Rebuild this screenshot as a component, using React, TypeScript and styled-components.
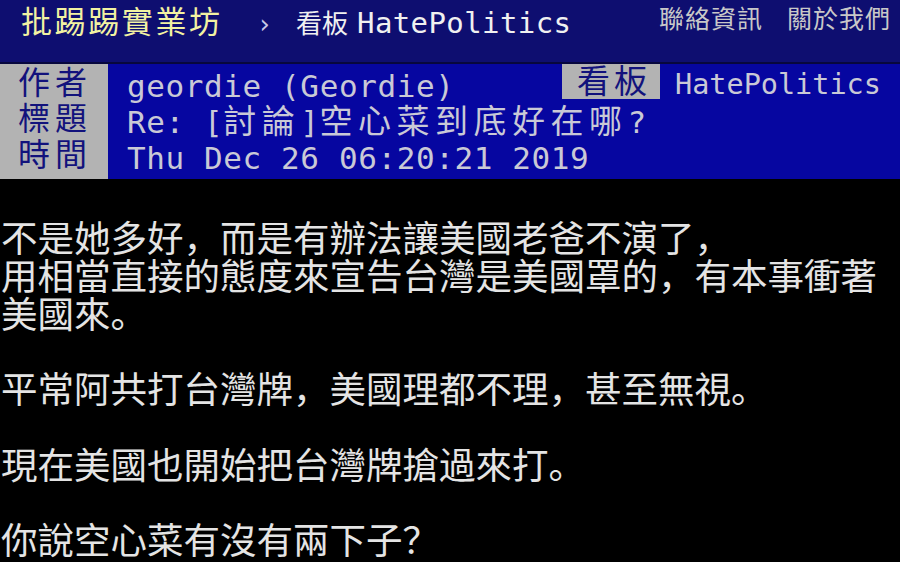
import React from "react";
import styled, { createGlobalStyle } from "styled-components";

const Global = createGlobalStyle`
  html, body { margin: 0; padding: 0; background: #000; }
  body { width: 900px; height: 562px; overflow: hidden; }
  #root { width: 900px; height: 562px; }
`;

const Page = styled.div`
  width: 900px;
  height: 562px;
  overflow: hidden;
  background: #000;
  display: flex;
  flex-direction: column;
`;

/* ---------- top bar ---------- */
const TopBar = styled.header`
  flex: none;
  height: 64px;
  box-sizing: border-box;
  background: #0e0e70;
  border-bottom: 2px solid #07073e;
  display: flex;
  align-items: flex-start;
  padding: 0 9px 0 21px;
`;

const Crumbs = styled.nav`
  display: flex;
  align-items: baseline;
  line-height: 40px;
  white-space: nowrap;
`;

const Brand = styled.a`
  font-family: "Noto Sans CJK TC", sans-serif;
  font-size: 31px;
  letter-spacing: 2.6px;
  color: #f2f2a2;
  text-decoration: none;
`;

const Chevron = styled.span`
  font-family: "DejaVu Sans", sans-serif;
  font-size: 26px;
  color: #c8c8e6;
  margin: 0 26px 0 37px;
`;

const BoardLabel = styled.span`
  font-family: "Noto Sans CJK TC", sans-serif;
  font-size: 26px;
  color: #f0f0f0;
  margin-right: 9px;
`;

const BoardName = styled.span`
  font-family: "DejaVu Sans Mono", monospace;
  font-size: 29px;
  letter-spacing: 0.4px;
  color: #f0f0f0;
`;

const Links = styled.div`
  margin-left: auto;
  display: flex;
  gap: 24px;
  line-height: 34px;
  white-space: nowrap;
`;

const NavLink = styled.a`
  font-family: "Noto Sans CJK TC", sans-serif;
  font-size: 25px;
  letter-spacing: 1px;
  color: #c8c8c8;
  text-decoration: none;
`;

/* ---------- article meta ---------- */
const Meta = styled.section`
  flex: none;
  height: 115px;
  background: #0606a0;
  display: flex;
`;

const TagColumn = styled.div`
  flex: none;
  width: 108px;
  box-sizing: border-box;
  padding-left: 18px;
  background: #b3b3b3;
  display: flex;
  flex-direction: column;
`;

const Tag = styled.div`
  height: 36px;
  line-height: 33px;
  font-family: "Noto Sans CJK TC", sans-serif;
  font-size: 32px;
  letter-spacing: 5px;
  color: #12127c;
  white-space: nowrap;
`;

const ValueColumn = styled.div`
  flex: 1;
  min-width: 0;
  display: flex;
  flex-direction: column;
  padding-left: 19px;
`;

const MetaRow = styled.div`
  height: 36px;
  display: flex;
  align-items: flex-start;
  white-space: pre;
`;

const Value = styled.span<{ $w?: number }>`
  font-family: "DejaVu Sans Mono", "Noto Sans CJK TC", monospace;
  font-size: 31px;
  letter-spacing: 0.6px;
  line-height: 44.5px;
  color: #c9c9d6;
  ${(p) => (p.$w ? `width: ${p.$w}px; flex: none;` : "")}
`;

const BoardValue = styled.span`
  margin-left: 15px;
  font-family: "DejaVu Sans Mono", monospace;
  font-size: 28.5px;
  line-height: 42px;
  color: #c9c9d6;
`;

const Wide = styled.span`
  font-family: "Noto Sans CJK TC", sans-serif;
  font-size: 33px;
  letter-spacing: 5.5px;
  line-height: 1;
`;

const BoardTag = styled.span`
  flex: none;
  width: 98px;
  height: 35px;
  box-sizing: border-box;
  padding-left: 15px;
  background: #b3b3b3;
  font-family: "Noto Sans CJK TC", sans-serif;
  font-size: 33px;
  letter-spacing: 4px;
  line-height: 30px;
  color: #12127c;
`;

/* ---------- article body ---------- */
const Article = styled.main`
  flex: 1;
  background: #000;
  padding: 39px 0 0 1px;
  font-family: "Noto Sans CJK SC", "Noto Sans CJK TC", sans-serif;
  font-size: 36.5px;
  line-height: 37.8px;
  color: #e4e4e4;
  white-space: pre;
`;

const Line = styled.div`
  height: 37.8px;
`;

const isWide = (ch: string) => /[\u2E80-\u9FFF\uF900-\uFAFF\uFF00-\uFF60\u3000-\u303F]/.test(ch);

function term(text: string): React.ReactNode[] {
  const out: React.ReactNode[] = [];
  let buf = "";
  let wide = false;
  const flush = (k: number) => {
    if (!buf) return;
    out.push(wide ? <Wide key={k}>{buf}</Wide> : <React.Fragment key={k}>{buf}</React.Fragment>);
    buf = "";
  };
  Array.from(text).forEach((ch, i) => {
    const w = isWide(ch);
    if (w !== wide) {
      flush(i);
      wide = w;
    }
    buf += ch;
  });
  flush(text.length);
  return out;
}

const body = [
  "不是她多好，而是有辦法讓美國老爸不演了，",
  "用相當直接的態度來宣告台灣是美國罩的，有本事衝著",
  "美國來。",
  "",
  "平常阿共打台灣牌，美國理都不理，甚至無視。",
  "",
  "現在美國也開始把台灣牌搶過來打。",
  "",
  "你說空心菜有沒有兩下子？",
];

export default function App() {
  return (
    <Page>
      <Global />
      <TopBar>
        <Crumbs>
          <Brand href="#">批踢踢實業坊</Brand>
          <Chevron>›</Chevron>
          <BoardLabel>看板</BoardLabel>
          <BoardName>HatePolitics</BoardName>
        </Crumbs>
        <Links>
          <NavLink href="#">聯絡資訊</NavLink>
          <NavLink href="#">關於我們</NavLink>
        </Links>
      </TopBar>

      <Meta>
        <TagColumn>
          <Tag>作者</Tag>
          <Tag>標題</Tag>
          <Tag>時間</Tag>
        </TagColumn>
        <ValueColumn>
          <MetaRow>
            <Value $w={435}>{term("geordie (Geordie)")}</Value>
            <BoardTag>看板</BoardTag>
            <BoardValue>HatePolitics</BoardValue>
          </MetaRow>
          <MetaRow>
            <Value>{term("Re: [討論]空心菜到底好在哪?")}</Value>
          </MetaRow>
          <MetaRow>
            <Value>{term("Thu Dec 26 06:20:21 2019")}</Value>
          </MetaRow>
        </ValueColumn>
      </Meta>

      <Article>
        {body.map((l, i) => (
          <Line key={i}>{l}</Line>
        ))}
      </Article>
    </Page>
  );
}
